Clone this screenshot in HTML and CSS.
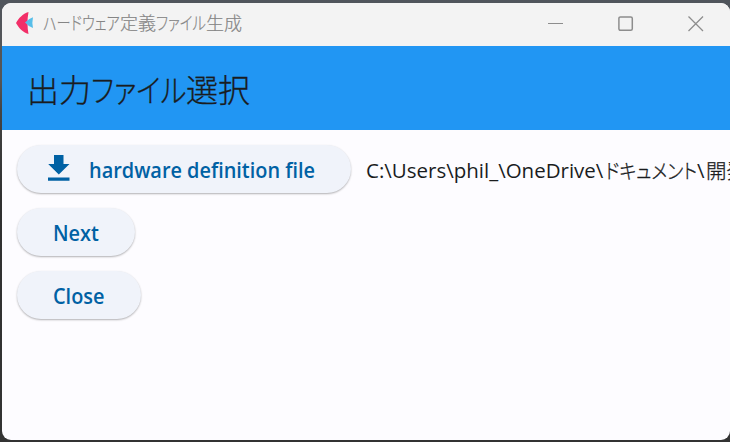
FILE: index.html
```html
<!DOCTYPE html>
<html lang="ja">
<head>
<meta charset="utf-8">
<title>ハードウェア定義ファイル生成</title>
<link rel="stylesheet" href="styles.css">
</head>
<body>
<div class="window">
  <header class="titlebar">
    <svg class="logo" width="18" height="22" viewBox="0 0 18 22"><path fill="#f22f68" d="M0 11C2.800 6 6.500 2 12.500 0Q10.500 11 12.500 22C6.500 20 2.800 16 0 11Z"/><path fill="#57bee9" d="M9 10.500Q12 7 17 5.300Q15.800 10.500 17 16Q12 14 9 10.500Z"/></svg>
    <div class="title"><span class="narrow hardware">ハードウェア</span><span class="kanji">定義</span><span class="narrow filename">ファイル</span><span class="kanji">生成</span></div>
    <div class="controls">
      <svg width="16" height="16" viewBox="0 0 16 16"><path d="M0 7.500H15"/></svg>
      <svg width="16" height="16" viewBox="0 0 16 16"><rect class="frame" x="0.900" y="0.900" width="13.400" height="13.400" rx="1.500"/></svg>
      <svg width="16" height="16" viewBox="0 0 16 16"><path class="cross" d="M.5.500L15 15M15 .5L.5 15"/></svg>
    </div>
  </header>
  <div class="appbar"><h1><span class="kanji">出力</span><span class="narrow filename">ファイル</span><span class="kanji">選択</span></h1></div>
  <main>
    <div class="row">
      <button class="file"><svg width="22" height="26" viewBox="0 0 22 26"><path fill="#0061a4" d="M6 0H15.500V9H21.500L10.800 19.500L.2 9H6ZM0 22.500H21.500V25.700H0Z"/></svg><span>hardware definition file</span></button>
      <div class="path"><span class="latin">C:\Users\phil_\OneDrive\</span><span class="narrow folder">ドキュメント</span><span class="slash">\</span><span class="tail">開発</span></div>
    </div>
    <button class="next"><span>Next</span></button>
    <button class="close"><span>Close</span></button>
  </main>
</div>
</body>
</html>
```
FILE: styles.css
```css
* { box-sizing: border-box; }
body {
  margin: 0;
  width: 730px;
  height: 442px;
  padding: 3px 0 2px 2px;
  overflow: hidden;
  background: linear-gradient(#50555c 0, #555 80px, #444 110px, #303030 200px, #333 100%);
  font-family: "Open Sans", "Noto Sans CJK JP", sans-serif;
}
.window {
  height: 437px;
  border-radius: 9px;
  overflow: hidden;
  background: #fdfcff;
}
.titlebar {
  height: 43px;
  display: flex;
  align-items: center;
  padding-left: 14px;
  background: #f3f3f3;
}
.logo { margin-top: -3px; }
.title {
  display: flex;
  margin: -5px 0 0 9px;
  font: 300 18px "Noto Sans CJK JP", sans-serif;
  color: #858585;
  -webkit-text-stroke: .2px #858585;
  font-feature-settings: "palt";
  white-space: nowrap;
}
.narrow { display: block; transform-origin: left; white-space: nowrap; }
.title .hardware { width: 77px; transform: scaleX(.79); }
.title .filename { width: 50px; transform: scaleX(.8); }
.title .kanji { width: 36px; }
.controls {
  margin: -2px 26px 0 auto;
  display: flex;
  gap: 54px;
}
.controls svg {
  fill: none;
  stroke: #8d8d8d;
  stroke-width: 1;
}
.controls .frame { stroke-width: 1.500; }
.controls .cross { stroke-width: 1.300; }
.appbar {
  height: 84px;
  display: flex;
  align-items: center;
  padding-left: 25px;
  background: #2196f3;
}
h1 {
  display: flex;
  margin: -1px 0 0;
  font: 300 32px "Noto Sans CJK JP", sans-serif;
  font-feature-settings: "palt";
  color: #1a1c1e;
  -webkit-text-stroke: .3px #1a1c1e;
  white-space: nowrap;
}
h1 .kanji { width: 64px; }
h1 .filename { width: 95px; transform: scaleX(.86); }
main {
  padding: 15px;
  display: flex;
  flex-direction: column;
  align-items: flex-start;
  gap: 15px;
}
.row {
  display: flex;
  align-items: center;
  gap: 15px;
}
button {
  height: 48px;
  flex: none;
  display: flex;
  align-items: center;
  padding: 2px 0 0 36px;
  border: 0;
  border-radius: 24px;
  background: #f0f3fa;
  box-shadow: 0 1px 2px rgba(0, 0, 0, .3);
  color: #0061a4;
  font: 600 21px "Open Sans", sans-serif;
  white-space: nowrap;
}
.file { width: 334px; padding-left: 31px; gap: 19px; }
.file svg { margin-top: -5px; }
.next { width: 118px; }
.close { width: 124px; }
button span { display: block; transform: scaleX(.947); transform-origin: left; }
.path {
  width: 364px;
  overflow: hidden;
  display: flex;
  align-items: center;
  padding-top: 2px;
  white-space: nowrap;
  font-size: 20.5px;
  color: #1a1c1e;
}
.path .latin { width: 239px; flex: none; }
.path .folder { width: 92px; flex: none; transform: scaleX(.88); }
.slash { width: 9px; flex: none; }
.path .folder, .tail {
  font-weight: 300;
  font-feature-settings: "palt";
  -webkit-text-stroke: .3px #1a1c1e;
}
```
